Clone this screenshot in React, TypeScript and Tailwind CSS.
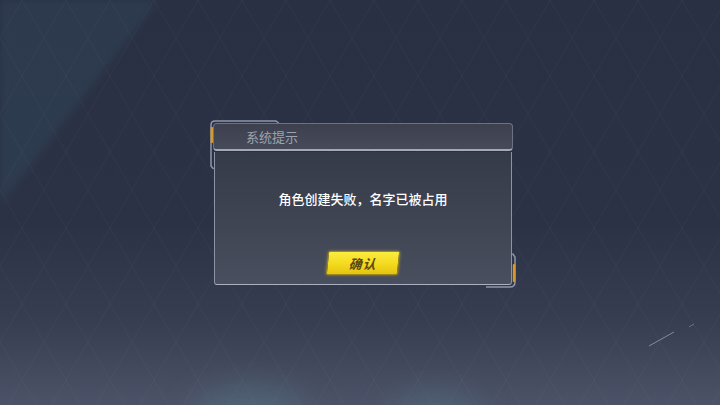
import React from "react";

const CJK = "font-['Noto_Sans_CJK_SC','Noto_Sans',sans-serif]";

// Faint diamond lattice + light leaks behind the dialog.
function Backdrop() {
  return (
    <svg
      className="pointer-events-none absolute inset-0"
      width={720}
      height={405}
      viewBox="0 0 720 405"
    >
      <defs>
        <pattern id="lattice" width="44" height="76" patternUnits="userSpaceOnUse">
          <path
            d="M22 0 L44 38 L22 76 L0 38 Z"
            fill="none"
            stroke="#ffffff"
            strokeOpacity="0.022"
            strokeWidth="1"
          />
        </pattern>
        <filter id="soft" x="-50%" y="-50%" width="200%" height="200%">
          <feGaussianBlur stdDeviation="18" />
        </filter>
        <filter id="softer" x="-20%" y="-20%" width="140%" height="140%">
          <feGaussianBlur stdDeviation="4" />
        </filter>
      </defs>
      <polygon points="0,0 158,0 0,205" fill="#35566a" opacity="0.28" filter="url(#softer)" />
      <rect width="720" height="405" fill="url(#lattice)" />
      <ellipse cx="250" cy="414" rx="55" ry="26" fill="#5b8a96" opacity="0.38" filter="url(#soft)" />
      <ellipse cx="435" cy="414" rx="45" ry="22" fill="#5b8a96" opacity="0.32" filter="url(#soft)" />
      <line x1="649" y1="346" x2="674" y2="332" stroke="#c8d4e0" strokeOpacity="0.5" strokeWidth="1" />
      <line x1="689" y1="327" x2="694" y2="324" stroke="#c8d4e0" strokeOpacity="0.35" strokeWidth="1" />
    </svg>
  );
}

// Stepped tech frame around the dialog, with the two amber tick marks.
function FrameTrim() {
  return (
    <svg
      className="pointer-events-none absolute inset-0"
      width={306}
      height={168}
      viewBox="0 0 306 168"
    >
      <path
        d="M3.5 49 L1 46 V5 Q1 1 5 1 H66 L69 3.5"
        fill="none"
        stroke="#9097a6"
        strokeWidth="1.5"
      />
      <path
        d="M276 167 H300 Q305 167 305 162 V137 L302.5 133.5"
        fill="none"
        stroke="#9097a6"
        strokeWidth="1.5"
      />
      <rect x="0.6" y="7" width="2.6" height="16" rx="1" fill="#d69a2c" />
      <rect x="302.8" y="144" width="2.6" height="18" rx="1" fill="#d69a2c" />
    </svg>
  );
}

export default function App() {
  return (
    <div className="relative h-[405px] w-[720px] overflow-hidden bg-[linear-gradient(180deg,#2a3043_0%,#2c3245_55%,#383e52_80%,#4c5267_100%)]">
      <Backdrop />
      <div className="relative flex h-full items-center justify-center">
        <div className={`relative ml-[6px] mt-[3px] h-[168px] w-[306px] ${CJK}`}>
          <FrameTrim />
          <div className="absolute left-[3px] top-[3px] flex h-[28px] w-[300px] items-center rounded-[4px] border border-[#6c7282] border-b-2 border-b-[#a3a9b6] bg-[linear-gradient(180deg,#3c404f,#474b59)] pl-[32px]">
            <span className="text-[13px] leading-none text-[#9da2ae]">系统提示</span>
          </div>
          <div className="absolute left-[4px] top-[32px] flex h-[133px] w-[298px] flex-col items-center rounded-b-[3px] border-[1.5px] border-t-0 border-[#8d93a2] border-b-[#aab0bd] bg-[linear-gradient(180deg,#363b4a,#404554_55%,#4a4f5f)]">
            <p className="mt-[38px] text-[13px] font-medium leading-[18px] text-white">
              角色创建失败，名字已被占用
            </p>
            <button
              type="button"
              className="mt-[43px] flex h-[24px] w-[72px] -skew-x-6 items-center justify-center rounded-[2px] border border-[#9c8a1c] bg-[linear-gradient(180deg,#fbec3e,#f2d81c_60%,#e6c312)] shadow-[0_0_3px_rgba(240,210,40,0.5)]"
            >
              <span className="text-[13px] font-bold italic leading-none tracking-[1px] text-[#5b4712]">确认</span>
            </button>
          </div>
        </div>
      </div>
    </div>
  );
}
